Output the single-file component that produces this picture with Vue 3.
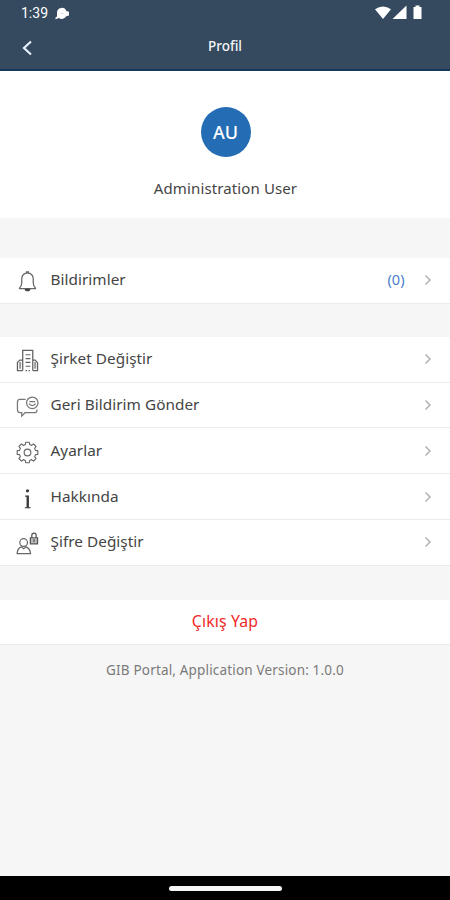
<script setup>
const menu = [
  { icon: 'company', label: 'Şirket Değiştir' },
  { icon: 'feedback', label: 'Geri Bildirim Gönder' },
  { icon: 'settings', label: 'Ayarlar' },
  { icon: 'info', label: 'Hakkında' },
  { icon: 'password', label: 'Şifre Değiştir' },
]

// Outline of an eight-toothed gear centred in a 24-unit box
const gearPoints = Array.from({ length: 8 }, (_, tooth) =>
  [[-15, 8.6], [-10, 10.9], [10, 10.9], [15, 8.6]].map(([offset, radius]) => {
    const angle = ((tooth * 45 + offset) * Math.PI) / 180
    return `${(12 + radius * Math.sin(angle)).toFixed(2)},${(12 - radius * Math.cos(angle)).toFixed(2)}`
  }).join(' ')
).join(' ')
</script>

<template>
  <div class="screen">
    <header class="header">
      <div class="status">
        <span class="time">1:39</span>
        <svg class="chat" width="16" height="13" viewBox="0 0 16 13">
          <path d="M.5 12.300V10.500l1.500-1V5.500a4.800 4.800 0 0 1 9.300-1.500l2.700.8v3.700l-2.700.8A5 5 0 0 1 4 11z" fill="#fff" />
          <path d="M5.500 6.500h3" stroke="#d5dce2" />
        </svg>
        <svg class="signals" width="50" height="16" viewBox="0 0 50 16">
          <path d="M1 4.200Q9-1.200 17 4.200L9 14z" fill="#fff" />
          <path d="M32.500.5V14H18.500z" fill="#fff" />
          <path d="M39.500 2h2V.6h4V2h2v12h-8z" fill="#fff" />
        </svg>
      </div>
      <div class="bar">
        <svg class="back" width="12" height="18" viewBox="0 0 12 18">
          <path d="M10 2.500L3 9l7 6.500" fill="none" stroke="#e4f1fb" stroke-width="2.200" />
        </svg>
        <h1 class="title">Profil</h1>
      </div>
    </header>

    <main class="content">
      <section class="profile">
        <div class="avatar">AU</div>
        <div class="name">Administration User</div>
      </section>

      <section class="group">
        <div class="row">
          <svg class="icon" viewBox="0 0 24 24">
            <g fill="none" stroke="#666" stroke-width="1.300">
              <path d="M3 19.500h18M3.500 19c2-2 2.500-3.500 2.500-5.500V9a6 6 0 0 1 12 0v4.500c0 2 .5 3.500 2.500 5.500" />
              <path d="M11 3.300V2h2v1.300" />
            </g>
            <path d="M9 19.500h6a3 2.800 0 0 1-6 0z" fill="#444" />
          </svg>
          <span class="label">Bildirimler</span>
          <span class="count">(0)</span>
          <svg class="arrow" viewBox="0 0 8 12"><path d="M1.500 1.500L6 6l-4.500 4.500" /></svg>
        </div>
      </section>

      <section class="group menu">
        <div v-for="item in menu" :key="item.icon" class="row">
          <svg class="icon" viewBox="0 0 24 24">
            <g v-if="item.icon === 'company'" fill="none" stroke="#606060" stroke-width="1.300">
              <path d="M7 22.500V1.500h10.500v21" />
              <path d="M7 11.500H4l-2.500 2.500v8.500H7M17.500 11.500h2.500l2.500 3v8h-5" />
              <path d="M10 6h5M10 10h5M10 14h5M10 18h5M10 22.500h1.500m1.500 0h1.500" />
              <path d="M4.300 13.500v7M20 13.500v7" stroke-width="2" stroke="#999" />
            </g>
            <g v-else-if="item.icon === 'feedback'" fill="none" stroke="#777" stroke-width="1.300">
              <path d="M10 4.500H4Q1.500 4.500 1.500 7.500v8q0 3 3 3H6V22l3.500-3.500H19q3 0 3-3.500" />
              <circle cx="17" cy="8.200" r="6" />
              <path d="M13.500 9q3.500 4 7 0M14 7h6" />
            </g>
            <g v-else-if="item.icon === 'settings'" fill="none" stroke="#666" stroke-width="1.200" stroke-linejoin="round">
              <polygon :points="gearPoints" />
              <circle cx="12" cy="12" r="3.500" />
            </g>
            <g v-else-if="item.icon === 'info'" fill="#3c3c3c">
              <circle cx="12" cy="4" r="1.700" />
              <path d="M9.500 8.800h4v12.200h1.800v1.300H9.200v-1.300H11V10.100H9.500z" />
            </g>
            <g v-else fill="none" stroke="#686868" stroke-width="1.300">
              <circle cx="8" cy="11" r="4" />
              <path d="M5.500 15.500Q1.500 17 1.200 22.500h14Q14.500 17 10.500 15.500L8 17.500z" />
              <path d="M15 6h7.500v6.500H15z" fill="#bbb" stroke="#555" />
              <path d="M16.500 6V3.500a2.250 2.300 0 0 1 4.500 0V6M18.800 7.500v3" stroke="#555" />
            </g>
          </svg>
          <span class="label">{{ item.label }}</span>
          <svg class="arrow" viewBox="0 0 8 12"><path d="M1.500 1.500L6 6l-4.500 4.500" /></svg>
        </div>
      </section>

      <div class="logout"><span>Çıkış Yap</span></div>
      <div class="version">GIB Portal, Application Version: 1.0.0</div>
    </main>

    <footer class="nav"><div class="pill"></div></footer>
  </div>
</template>

<style>
body {
  margin: 0;
}
</style>

<style scoped>
.screen {
  width: 450px;
  height: 900px;
  display: flex;
  flex-direction: column;
  background: #f6f6f6;
  font-family: "Noto Sans", "Open Sans", sans-serif;
  color: #444;
  overflow: hidden;
}
.header {
  box-sizing: border-box;
  height: 71px;
  background: #354a5f;
  border-bottom: 2px solid #17385c;
}
.status {
  height: 26px;
  display: flex;
  align-items: center;
  padding: 0 26px 0 21px;
  color: #fff;
}
.time {
  font: 14px/26px Roboto, sans-serif;
  width: 34px;
}
.chat {
  margin-top: 1px;
}
.signals {
  margin-left: auto;
}
.bar {
  height: 43px;
  display: grid;
  grid-template-columns: 42px 1fr 42px;
}
.back {
  margin: 13px 0 0 21px;
}
.title {
  margin: 0;
  text-align: center;
  font-size: 13.500px;
  line-height: 40px;
  font-weight: 500;
  color: #f4f6f8;
}
.content {
  flex: 1;
}
.profile {
  height: 147px;
  background: #fff;
  display: flex;
  flex-direction: column;
  align-items: center;
}
.avatar {
  margin: 36px 0 0 1px;
  width: 50px;
  height: 50px;
  flex: none;
  border-radius: 50%;
  background: #246db5;
  color: #fff;
  text-align: center;
  font-size: 18px;
  line-height: 50px;
  font-weight: 500;
}
.name {
  margin: 19px 0 0 1px;
  font-size: 15px;
  letter-spacing: 0.120px;
  line-height: 24px;
  white-space: nowrap;
}
.group {
  margin-top: 40px;
}
.menu {
  margin-top: 33px;
}
.row {
  box-sizing: border-box;
  height: 45.800px;
  display: flex;
  align-items: center;
  padding: 0 18px 0 16px;
  background: #fff;
  border-bottom: 1px solid #ebebeb;
}
.icon {
  width: 23px;
  height: 23px;
  flex: none;
  margin: 3px 11.500px 0 0;
}
.label {
  flex: 1;
  margin-top: -2px;
  font-size: 15.300px;
  letter-spacing: 0.050px;
  line-height: 22px;
  white-space: nowrap;
}
.count {
  margin: -3px 19.500px 0 0;
  color: #4b7dca;
  font-size: 14.500px;
  line-height: 20px;
}
.arrow {
  width: 8px;
  height: 12px;
  fill: none;
  stroke: #acacac;
  stroke-width: 1.400;
}
.logout {
  box-sizing: border-box;
  margin-top: 34px;
  height: 45px;
  background: #fff;
  border-bottom: 1px solid #ebebeb;
  color: #f02828;
  font-size: 15.800px;
  letter-spacing: 0.150px;
  line-height: 43px;
  text-align: center;
}
.version {
  margin-top: 15px;
  color: #7a7a7a;
  font-size: 13.500px;
  letter-spacing: 0.170px;
  line-height: 20px;
  text-align: center;
  white-space: nowrap;
}
.nav {
  height: 24px;
  background: #000;
  display: flex;
  align-items: center;
  justify-content: center;
}
.pill {
  width: 113px;
  height: 5px;
  border-radius: 3px;
  background: #f5f5f5;
}
</style>
